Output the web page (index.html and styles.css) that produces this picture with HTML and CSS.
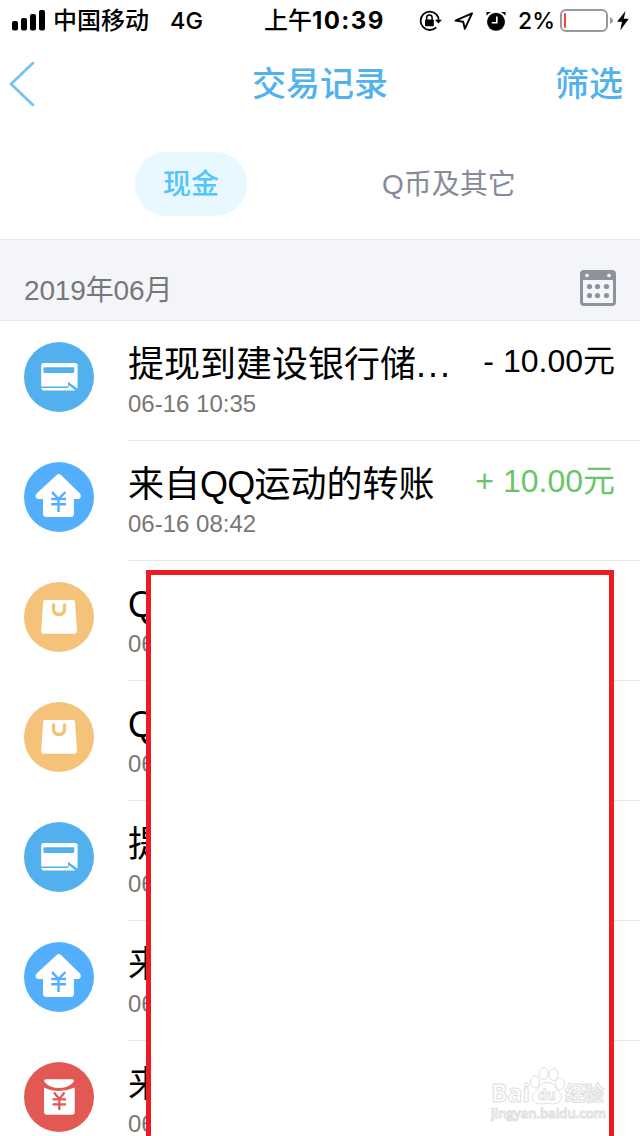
FILE: index.html
```html
<!DOCTYPE html>
<html lang="zh-CN">
<head>
<meta charset="utf-8">
<title>交易记录</title>
<link rel="stylesheet" href="styles.css">
</head>
<body>
<svg class="defs" aria-hidden="true">
  <symbol id="card" viewBox="0 0 70 70">
    <circle cx="35" cy="35" r="35" fill="#52b0ee"/>
    <path d="M19.7 21H51Q53.6 21 53.6 23.6V46.8L44 39.8V44.4H17.2V23.6Q17.2 21 19.7 21Z" fill="#fff"/>
    <rect x="19.5" y="25.3" width="30.7" height="5.6" rx="1" fill="#52b0ee"/>
    <path d="M17.4 46H43.8L45.3 43.5L51.5 48.6H19.5Q17.6 48.6 17.4 46Z" fill="#fff"/>
  </symbol>
  <symbol id="house" viewBox="0 0 70 70">
    <circle cx="35" cy="35" r="35" fill="#53affb"/>
    <path d="M32.7 13Q34.8 11 37 13L56 31.5Q58.2 35.5 54.5 37H50V51.5Q50 55 46.5 55H22.5Q19 55 19 51.5V37H13.5Q10.2 35 12.6 31.5Z" fill="#fff"/>
    <path d="M28 30L34.5 37L41.5 30M34.5 37V50M27.2 37H42M27.2 42.3H42" fill="none" stroke="#53affb" stroke-width="2.4"/>
  </symbol>
  <symbol id="bag" viewBox="0 0 70 70">
    <circle cx="35" cy="35" r="35" fill="#f4c278"/>
    <path d="M21 18H49Q51 18 51.1 20L53 49Q53 51.8 50.5 51.8H19.5Q17 51.8 17.1 49L19.2 20Q19.3 18 21 18Z" fill="#fff"/>
    <path d="M29.5 23V27Q29.5 32.5 35 32.5T40.5 27V23" fill="none" stroke="#f4c278" stroke-width="3.4" stroke-linecap="round"/>
  </symbol>
  <symbol id="packet" viewBox="0 0 70 70">
    <circle cx="35" cy="35" r="35" fill="#e25852"/>
    <path d="M22 17.2H48Q50.5 17.5 49.5 20Q44 26 35 26T20.5 20Q19.7 17.5 22 17.2Z" fill="#fff"/>
    <path d="M20 25.5Q27 29 35 29T50.7 25.5V50Q50.7 52.8 48 52.8H22.8Q20 52.8 20 50Z" fill="#fff"/>
    <path d="M30 30.5L35.3 37L40.5 30.5M35.3 37V48M28.5 37.3H42M28.5 42.3H42" fill="none" stroke="#e25852" stroke-width="2.3"/>
  </symbol>
</svg>
<main class="screen">
  <div class="status">
    <svg class="signal" width="34" height="21" viewBox="0 0 34 21"><rect y="11" width="6" height="9.5" rx="2"/><rect x="9" y="8" width="6" height="12.5" rx="2"/><rect x="18" y="4" width="6" height="16.5" rx="2"/><rect x="27" width="6" height="20.5" rx="2"/></svg>
    <span class="carrier">中国移动</span>
    <span class="network">4G</span>
    <span class="clock">上午<b>10:39</b></span>
    <svg class="lock" width="23" height="22" viewBox="0 0 23 22"><path d="M17.6 4.6A9.2 9.2 0 1 0 17.3 17.3M17.6 4.6Q19.6 7 19.6 10" fill="none" stroke="#000" stroke-width="1.8"/><path d="M15.9 9.7H23L19.4 13.6Z"/><rect x="6" y="9.5" width="8.8" height="6.8" rx=".8"/><path d="M7.7 10V7.5Q7.7 5 10.4 5T13.1 7.5V10" fill="none" stroke="#000" stroke-width="1.5"/></svg>
    <svg class="arrow" width="20" height="20" viewBox="0 0 20 20"><path d="M1.5 9.6L18 2.3L10.8 17.8L9.2 10.8Z" fill="none" stroke="#000" stroke-width="1.9" stroke-linejoin="round"/></svg>
    <svg class="alarm" width="20" height="20" viewBox="0 0 20 20"><circle cx="10" cy="10.8" r="9"/><path d="M.5 4.8V1H5.2Q2.5 2 .5 4.8ZM19.5 4.8V1H14.8Q17.5 2 19.5 4.8Z"/><path d="M10.8 5.5V11.7H5.8" fill="none" stroke="#fff" stroke-width="1.6"/></svg>
    <span class="percent">2%</span>
    <svg class="battery" width="54" height="24" viewBox="0 0 54 24"><rect x="1" y="1" width="46" height="21" rx="5" fill="none" stroke="#999" stroke-width="2"/><path d="M50 8Q53 9.5 53 11.5T50 15Z" fill="#999"/><rect x="4" y="4" width="2" height="15" rx="1" fill="#f04438"/></svg>
    <svg class="bolt" width="12" height="20" viewBox="0 0 12 20"><path d="M8.5 0L0 10.8H5L3.2 19.5L11.8 7.7H6.8Z"/></svg>
  </div>
  <header class="nav">
    <svg class="back" width="26" height="44" viewBox="0 0 26 44"><path d="M24 1L2 22L24 43" fill="none" stroke="#6fc1f2" stroke-width="2.6" stroke-linecap="round"/></svg>
    <h1 class="title">交易记录</h1>
    <span class="filter">筛选</span>
  </header>
  <nav class="tabs">
    <span class="tab active">现金</span>
    <span class="tab">Q币及其它</span>
  </nav>
  <section class="month">
    <span>2019年06月</span>
    <svg width="36" height="36" viewBox="0 0 36 36"><rect x="1.5" y="1.5" width="33" height="33" rx="2.5" fill="none" stroke="#8f919c" stroke-width="3"/><path d="M1 3H35V10H1Z" fill="#8f919c"/><g fill="#fff"><circle cx="7" cy="5.5" r="1.8"/><circle cx="29" cy="5.5" r="1.8"/></g><g fill="#8f919c"><circle cx="9.5" cy="16.5" r="2.6"/><circle cx="17.5" cy="16.5" r="2.6"/><circle cx="26.5" cy="16.5" r="2.6"/><circle cx="9.5" cy="25.5" r="2.6"/><circle cx="17.5" cy="25.5" r="2.6"/><circle cx="26.5" cy="25.5" r="2.6"/></g></svg>
  </section>
  <ul class="list">
    <li class="row"><svg class="icon"><use href="#card"/></svg><div class="body"><div class="info"><p class="name">提现到建设银行储<span class="dots">...</span></p><p class="date">06-16 10:35</p></div><p class="amount">- 10.00元</p></div></li>
    <li class="row"><svg class="icon"><use href="#house"/></svg><div class="body"><div class="info"><p class="name">来自<span class="latin">QQ</span>运动的转账</p><p class="date">06-16 08:42</p></div><p class="amount income">+ 10.00元</p></div></li>
    <li class="row"><svg class="icon"><use href="#bag"/></svg><div class="body"><div class="info"><p class="name"><span class="latin">Q</span></p><p class="date">06</p></div></div></li>
    <li class="row"><svg class="icon"><use href="#bag"/></svg><div class="body"><div class="info"><p class="name"><span class="latin">Q</span></p><p class="date">06</p></div></div></li>
    <li class="row"><svg class="icon"><use href="#card"/></svg><div class="body"><div class="info"><p class="name">提</p><p class="date">06</p></div></div></li>
    <li class="row"><svg class="icon"><use href="#house"/></svg><div class="body"><div class="info"><p class="name">来</p><p class="date">06</p></div></div></li>
    <li class="row"><svg class="icon"><use href="#packet"/></svg><div class="body"><div class="info"><p class="name">来</p><p class="date">06</p></div></div></li>
  </ul>
  <div class="cover"></div>
  <div class="watermark">
    <svg width="120" height="60" viewBox="0 0 120 60">
      <g class="mark">
        <text x="0" y="38" font-size="25" font-weight="700" textLength="39" lengthAdjust="spacingAndGlyphs">Bai</text>
        <g class="paw"><ellipse cx="44" cy="18" rx="4.5" ry="6"/><ellipse cx="52.5" cy="9.5" rx="4.5" ry="6"/><ellipse cx="62.5" cy="10.5" rx="4.5" ry="6"/><ellipse cx="69" cy="20" rx="4.5" ry="6"/><path d="M56 18.5C64 18.5 64 25 69 29C74 37 66 42 56 39C46 42 38 37 43 29C48 25 48 18.5 56 18.5Z"/></g>
        <text x="47" y="36" font-size="15" font-weight="700" textLength="18" lengthAdjust="spacingAndGlyphs">du</text>
        <text class="cn" x="74" y="37" font-size="20" font-weight="700" textLength="39">经验</text>
        <text x="0" y="54" font-size="13" font-weight="600" textLength="115" lengthAdjust="spacingAndGlyphs">jingyan.baidu.com</text>
      </g>
    </svg>
  </div>
</main>
</body>
</html>
```

FILE: styles.css
```css
* { box-sizing: border-box; }
body, h1, p, ul { margin: 0; padding: 0; }
body { background: #fff; color: #000; font-family: "Liberation Sans", "Noto Sans CJK SC", sans-serif; }
.defs { position: absolute; width: 0; height: 0; }
.screen { position: relative; width: 640px; height: 1136px; overflow: hidden; }

.status { display: flex; align-items: center; height: 40px; padding: 1px 0 0 12px; font: 500 24px/40px Inter, "Noto Sans CJK SC", sans-serif; white-space: nowrap; }
.carrier { width: 96px; margin-left: 7px; }
.network { width: 34px; margin-left: 21px; font-size: 23.5px; }
.clock { width: 121px; margin-left: 60px; }
.clock b { font-weight: 700; letter-spacing: 1.4px; }
.lock { margin-left: 34px; }
.arrow { margin-left: 12px; }
.alarm { margin-left: 12px; }
.percent { width: 36px; margin-left: 12px; font-size: 23px; }
.battery { margin-left: 6px; }
.bolt { margin-left: 3px; }
.status svg { flex: none; }

.nav { display: grid; grid-template-columns: 1fr auto 1fr; align-items: center; height: 88px; padding: 0 17px 0 9px; color: #52b2ef; font-family: "Noto Sans CJK SC", sans-serif; }
.title { padding: 0 0 5px 8px; font-size: 34px; font-weight: 500; }
.nav .back { margin-top: -1px; }
.filter { justify-self: end; padding-bottom: 5px; font-size: 34px; font-weight: 500; }

.tabs { display: flex; height: 111px; padding: 24px 0 0 135px; gap: 107px; font-size: 28px; line-height: 62px; color: #878b99; }
.tab { height: 64px; padding: 2px 28px 0; }
.active { border-radius: 32px; background: #e9f8fe; color: #54c5f8; font-weight: 500; }

.month { display: flex; justify-content: space-between; height: 82px; padding: 30px 24px 0; border: solid #e4e6e9; border-width: 1px 0; background: #f4f5f9; color: #777; font-size: 28px; line-height: 42px; letter-spacing: -.15px; }

.list { list-style: none; }
.row { display: flex; align-items: flex-start; height: 120px; padding-left: 24px; }
.icon { width: 70px; height: 70px; margin: 21px 34px 0 0; flex: none; }
.body { display: flex; justify-content: space-between; flex: 1; height: 120px; padding-right: 25px; border-bottom: 1px solid #e5e5e7; white-space: nowrap; }
.info { padding-top: 18px; }
.name { font-size: 36px; line-height: 51px; }
.latin { letter-spacing: -.8px; }
.dots { letter-spacing: 2px; }
.date { color: #777; font-size: 24px; line-height: 28px; }
.amount { padding-top: 19px; font-size: 32px; line-height: 42px; }
.income { color: #69c568; }

.cover { position: absolute; left: 146px; top: 570px; width: 468px; height: 580px; border: 5px solid #ed1c24; background: #fff; }
.watermark { position: absolute; left: 491px; top: 1064px; }
.mark { fill: #fff; stroke: #dedede; stroke-width: 1px; font-family: "Open Sans", sans-serif; }
.cn { font-family: "Noto Sans CJK SC", sans-serif; }
```
